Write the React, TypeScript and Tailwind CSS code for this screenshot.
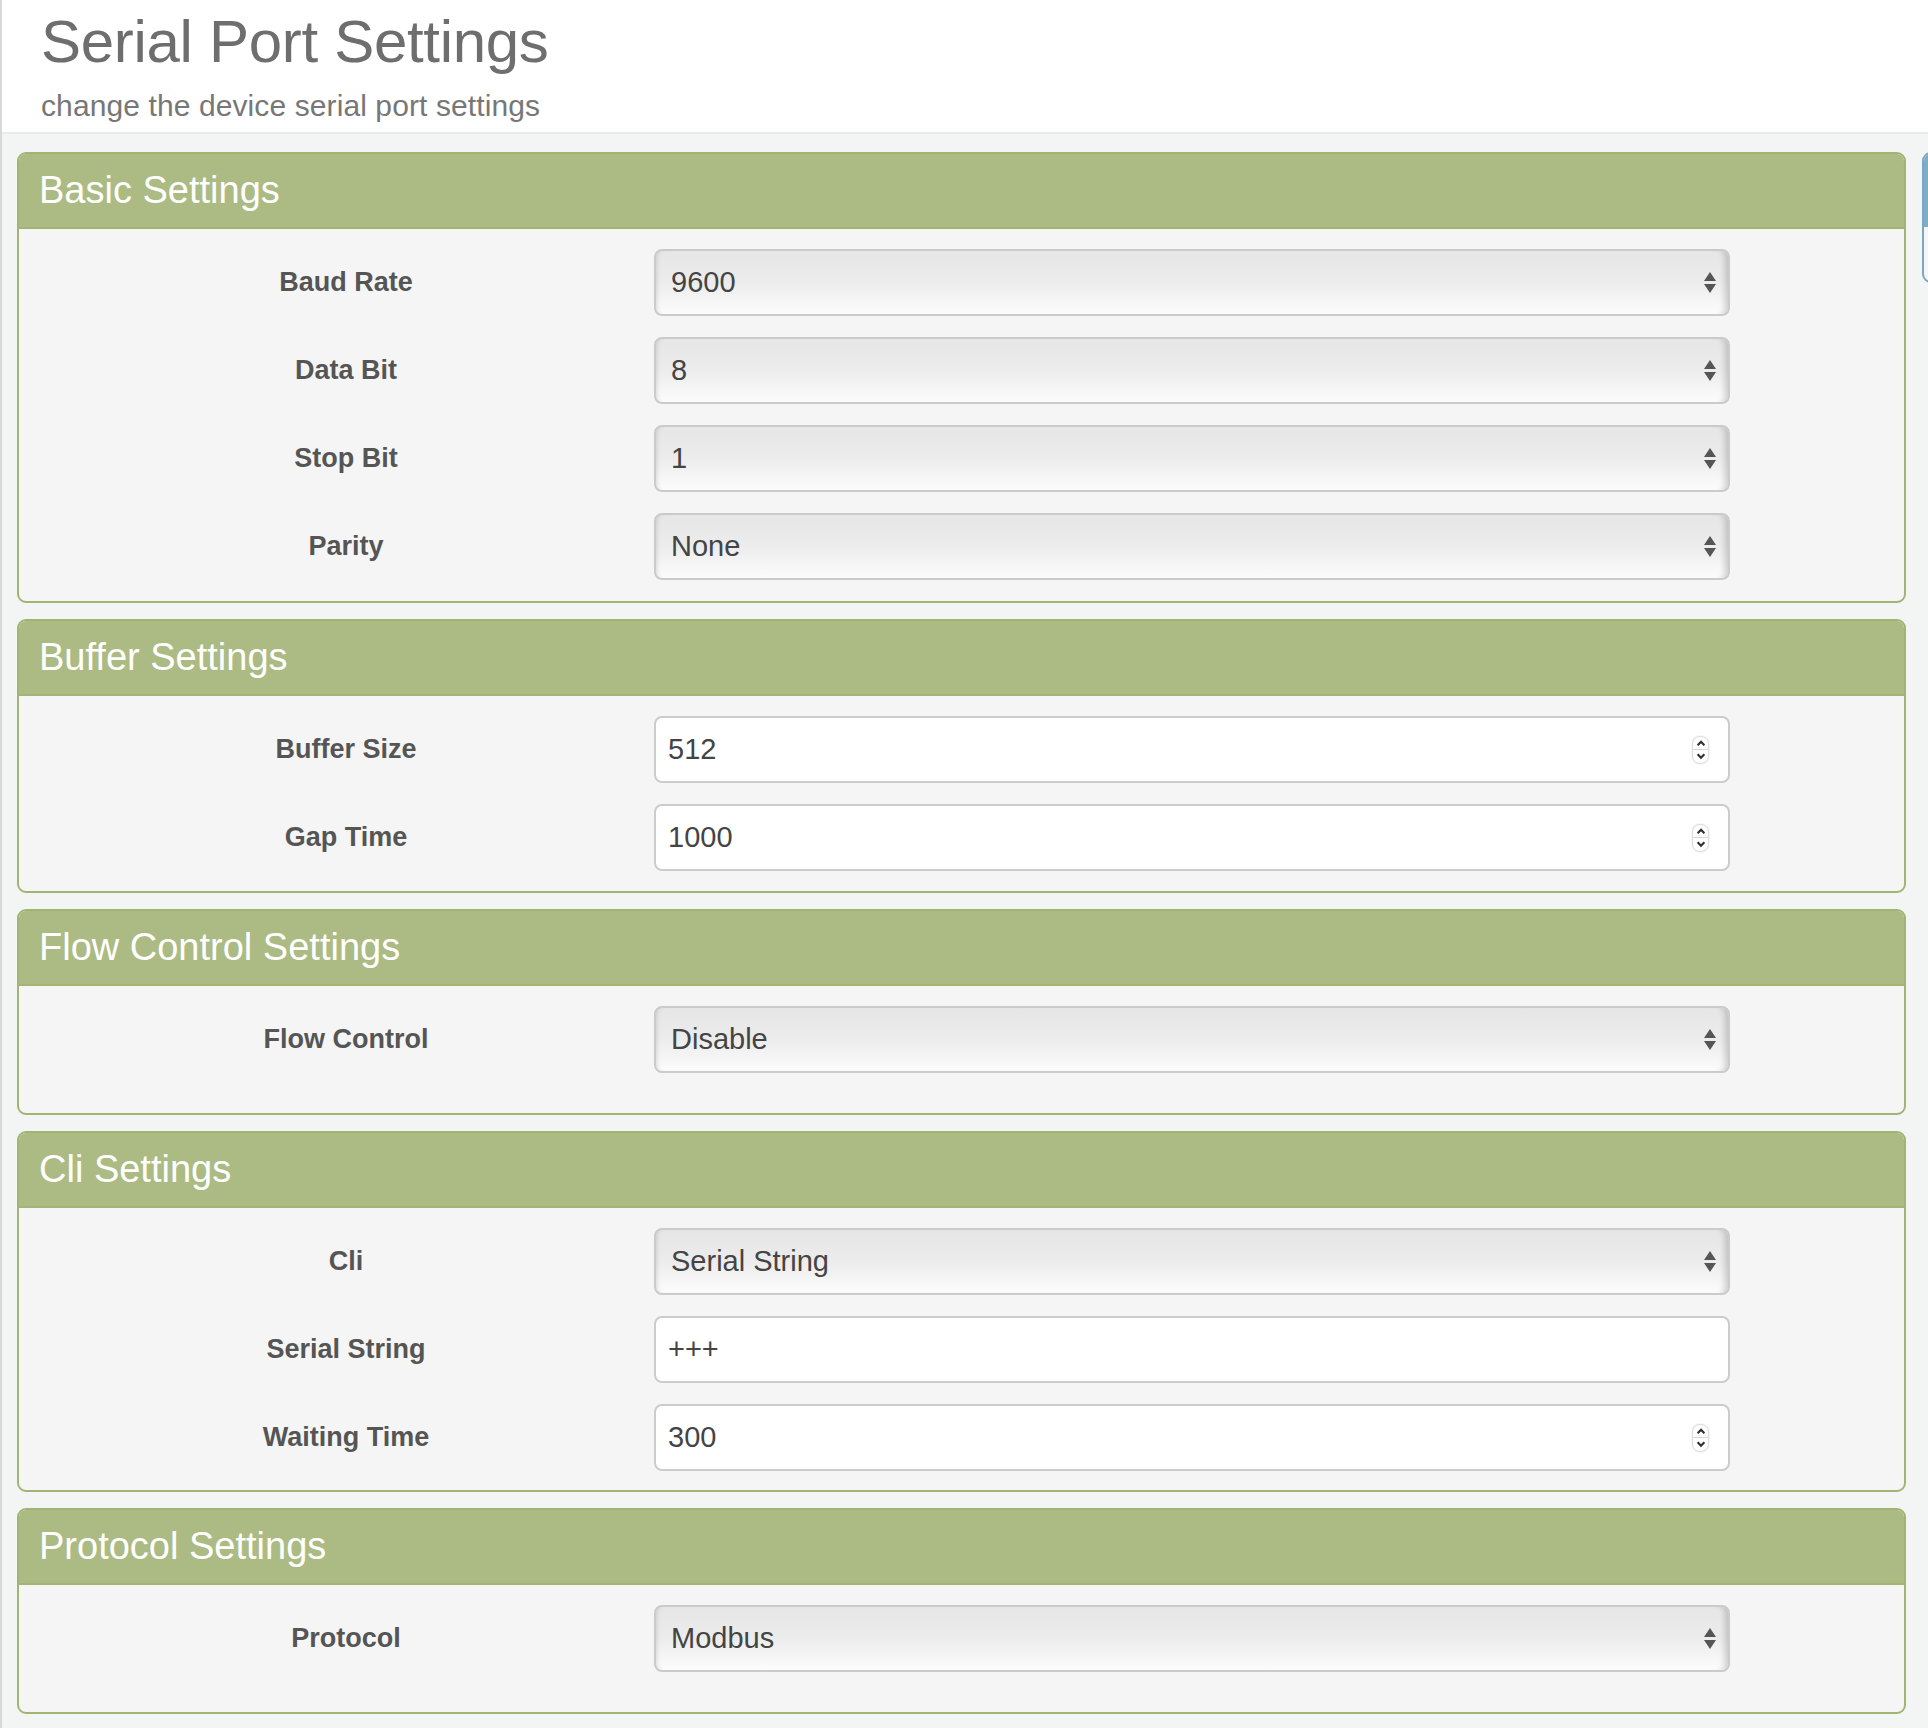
import React from "react";

type Row =
  | { label: string; kind: "select"; value: string }
  | { label: string; kind: "number"; value: string }
  | { label: string; kind: "text"; value: string };

type Section = { title: string; rows: Row[]; body: string };

const sections: Section[] = [
  {
    title: "Basic Settings",
    body: "flex flex-col gap-[21px] pt-[20px] pb-[21px]",
    rows: [
      { label: "Baud Rate", kind: "select", value: "9600" },
      { label: "Data Bit", kind: "select", value: "8" },
      { label: "Stop Bit", kind: "select", value: "1" },
      { label: "Parity", kind: "select", value: "None" },
    ],
  },
  {
    title: "Buffer Settings",
    body: "flex flex-col gap-[21px] pt-[20px] pb-[20px]",
    rows: [
      { label: "Buffer Size", kind: "number", value: "512" },
      { label: "Gap Time", kind: "number", value: "1000" },
    ],
  },
  {
    title: "Flow Control Settings",
    body: "flex flex-col gap-[21px] pt-[20px] pb-[40px]",
    rows: [{ label: "Flow Control", kind: "select", value: "Disable" }],
  },
  {
    title: "Cli Settings",
    body: "flex flex-col gap-[21px] pt-[20px] pb-[19px]",
    rows: [
      { label: "Cli", kind: "select", value: "Serial String" },
      { label: "Serial String", kind: "text", value: "+++" },
      { label: "Waiting Time", kind: "number", value: "300" },
    ],
  },
  {
    title: "Protocol Settings",
    body: "flex flex-col gap-[21px] pt-[20px] pb-[40px]",
    rows: [{ label: "Protocol", kind: "select", value: "Modbus" }],
  },
];

function SelectArrows() {
  return (
    <svg width="14" height="24" viewBox="0 0 14 24" className="shrink-0">
      <polygon points="7,1 13,10 1,10" fill="#555555" />
      <polygon points="1,13 13,13 7,22" fill="#555555" />
    </svg>
  );
}

function Spinner() {
  return (
    <div className="flex h-[28px] w-[17px] flex-col items-center justify-between overflow-hidden rounded-[8px] border border-[#dedede] bg-white shadow-[0_0_2px_rgba(0,0,0,0.12)]">
      <svg width="14" height="13" viewBox="0 0 14 13">
        <polyline points="3.5,8.5 7,5 10.5,8.5" fill="none" stroke="#2f2f2f" strokeWidth="2.2" />
      </svg>
      <div className="h-px w-full bg-[#d8d8d8]" />
      <svg width="14" height="13" viewBox="0 0 14 13">
        <polyline points="3.5,4.5 7,8 10.5,4.5" fill="none" stroke="#2f2f2f" strokeWidth="2.2" />
      </svg>
    </div>
  );
}

function Control({ row }: { row: Row }) {
  if (row.kind === "select") {
    return (
      <div className="flex h-[67px] w-[1076px] items-center justify-between rounded-[8px] border-2 border-[#cbcbcb] bg-gradient-to-b from-[#e6e6e6] via-[#ececec] to-[#fcfcfc] pl-[15px] pr-[11px] shadow-[inset_-8px_0_6px_-5px_rgba(0,0,0,0.18),inset_5px_0_4px_-4px_rgba(0,0,0,0.12)]">
        <span className="text-[29px] text-[#444]">{row.value}</span>
        <SelectArrows />
      </div>
    );
  }
  return (
    <div className="flex h-[67px] w-[1076px] items-center justify-between rounded-[8px] border-2 border-[#cccccc] bg-white pl-[12px] pr-[19px]">
      <span className="text-[29px] text-[#444]">{row.value}</span>
      {row.kind === "number" ? <Spinner /> : null}
    </div>
  );
}

function Panel({ section }: { section: Section }) {
  return (
    <div className="w-[1889px] overflow-hidden rounded-[9px] border-2 border-[#a2b472] bg-[#f4f5f4]">
      <div className="flex h-[75px] items-center border-b-2 border-[#a3b475] bg-[#acbb83] pl-[20px]">
        <span className="text-[38px] text-white">{section.title}</span>
      </div>
      <div className={section.body}>
        {section.rows.map((row) => (
          <div key={row.label} className="flex items-center">
            <div className="w-[635px] shrink-0 pl-[19px] text-center text-[27px] font-bold text-[#555]">
              {row.label}
            </div>
            <Control row={row} />
          </div>
        ))}
      </div>
    </div>
  );
}

export default function App() {
  return (
    <div className="min-h-[1728px] w-[1928px] overflow-hidden border-l-2 border-[#d8d8d8] bg-[#f3f5f4] font-['Liberation_Sans',Arial,sans-serif]">
      <div className="h-[134px] border-b-2 border-[#e9ebea] bg-white pl-[39px] pt-[12px]">
        <div className="text-[60px] leading-none tracking-[-0.3px] text-[#6e6e6e]">Serial Port Settings</div>
        <div className="mt-[19px] text-[30px] leading-none tracking-[0.1px] text-[#777]">change the device serial port settings</div>
      </div>
      <div className="flex gap-[16px] pl-[15px] pt-[18px]">
        <div className="flex shrink-0 flex-col gap-[16px]">
          {sections.map((s) => (
            <Panel key={s.title} section={s} />
          ))}
        </div>
        <div className="h-[131px] w-[300px] shrink-0 overflow-hidden rounded-[9px] border-2 border-[#7aa9bf] bg-[#f4f5f4]">
          <div className="h-[73px] bg-[#7eaec4]" />
        </div>
      </div>
    </div>
  );
}
